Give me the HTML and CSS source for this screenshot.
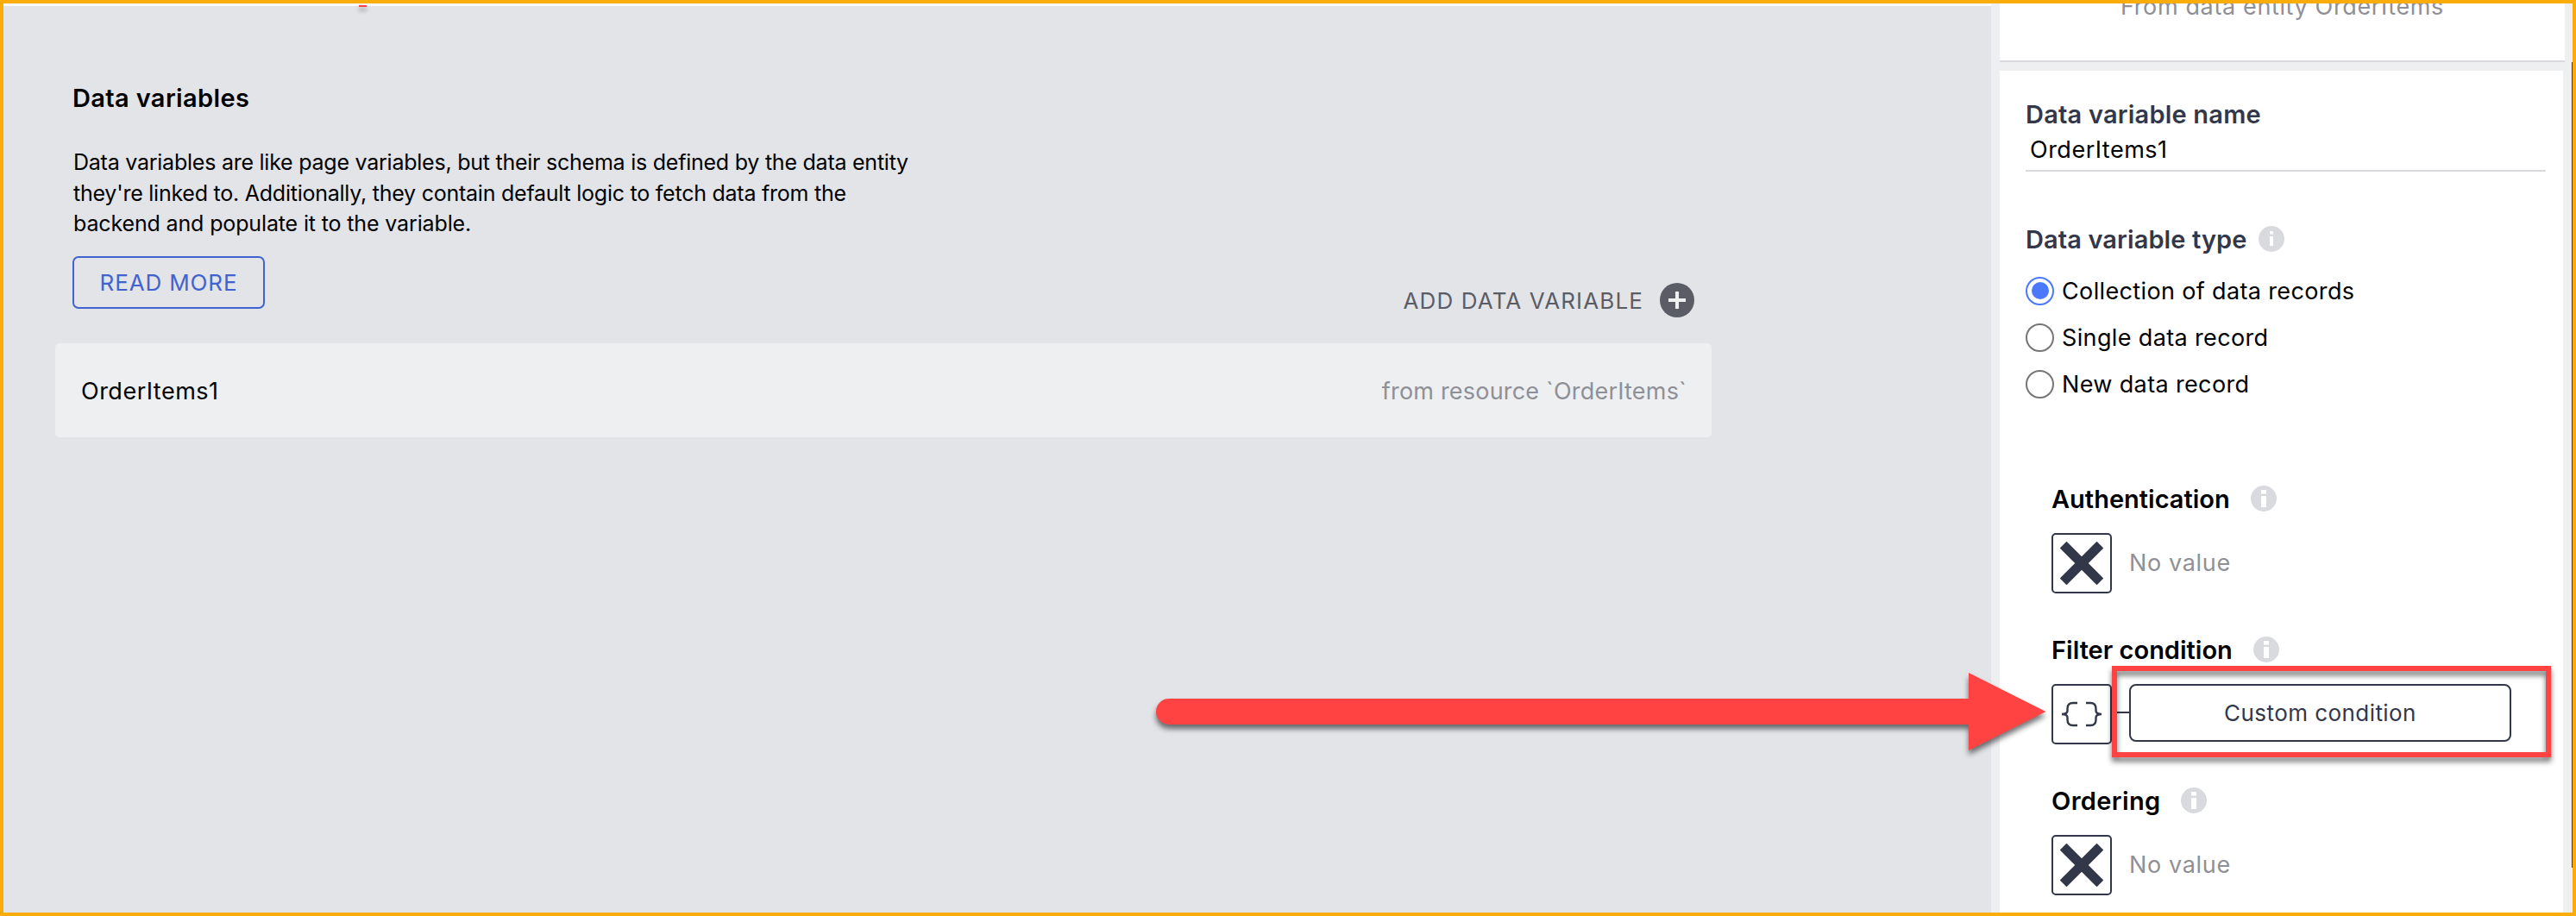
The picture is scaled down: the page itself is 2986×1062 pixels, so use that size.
FILE: index.html
```html
<!DOCTYPE html>
<html lang="en">
<head>
<meta charset="utf-8">
<title>Data variables</title>
<link rel="stylesheet" href="styles.css">
</head>
<body>
<svg width="0" height="0" class="defs">
  <symbol id="info" viewBox="0 0 30 30"><circle cx="15" cy="15" r="15" fill="#d9dade"/><path d="M12 5h6v4.5h-6zM12 12h6v13h-6z" fill="#fff"/></symbol>
  <symbol id="info-thin" viewBox="0 0 30 30"><circle cx="15" cy="15" r="15" fill="#d9dade"/><path d="M13 6h4v3.5h-4zM13 12h4v11h-4z" fill="#fff"/></symbol>
  <symbol id="cross" viewBox="0 0 50 50"><path d="M3.6 3.6 46.4 46.4M46.4 3.6 3.6 46.4" stroke="#32384a" stroke-width="11" fill="none"/></symbol>
</svg>
<div class="frame">
  <main class="main">
    <header class="head">
      <section>
        <h1 class="title">Data variables</h1>
        <p class="intro"><span>Data variables are like page variables, but their schema is defined by the data entity</span><span>they're linked to. Additionally, they contain default logic to fetch data from the</span><span class="last">backend and populate it to the variable.</span></p>
        <a class="read-more">READ MORE</a>
      </section>
      <div class="add">
        <span>ADD DATA VARIABLE</span>
        <svg width="40" height="40" viewBox="0 0 40 40"><circle cx="20" cy="20" r="20" fill="#5a5d66"/><path d="M10 20h20M20 10v20" stroke="#eeeff1" stroke-width="4"/></svg>
      </div>
    </header>
    <div class="row"><span class="row-name">OrderItems1</span><span class="row-source">from resource `OrderItems`</span></div>
  </main>
  <aside class="panel">
    <div class="source"><span>From data entity OrderItems</span></div>
    <div class="card">
      <div class="label">Data variable name</div>
      <div class="input">OrderItems1</div>
      <div class="label type">Data variable type<svg class="info"><use href="#info-thin"/></svg></div>
      <div class="radios">
        <div class="radio"><i class="dot on"></i><span>Collection of data records</span></div>
        <div class="radio"><i class="dot"></i><span>Single data record</span></div>
        <div class="radio"><i class="dot"></i><span>New data record</span></div>
      </div>
      <div class="fields">
        <div class="field">
          <div class="field-label auth">Authentication<svg class="info"><use href="#info"/></svg></div>
          <div class="control"><div class="box"><svg width="50" height="50"><use href="#cross"/></svg></div><span class="empty">No value</span></div>
        </div>
        <div class="field">
          <div class="field-label filter">Filter condition<svg class="info"><use href="#info"/></svg></div>
          <div class="control">
            <div class="box"><svg width="48" height="30" viewBox="0 0 48 30"><path d="M19 2H14Q7.5 2 7.5 8.500V11Q7.500 15 1 15Q7.500 15 7.500 19V21.500Q7.500 28 14 28H19M29 2H34Q40.500 2 40.500 8.500V11Q40.500 15 47 15Q40.500 15 40.500 19V21.500Q40.500 28 34 28H29" fill="none" stroke="#32384a" stroke-width="2.400"/></svg></div>
            <div class="link"></div>
            <div class="custom">Custom condition</div>
          </div>
        </div>
        <div class="field">
          <div class="field-label order">Ordering<svg class="info"><use href="#info"/></svg></div>
          <div class="control"><div class="box"><svg width="50" height="50"><use href="#cross"/></svg></div><span class="empty">No value</span></div>
        </div>
      </div>
    </div>
    <div class="scroll-edge"></div>
  </aside>
</div>
<div class="tick"></div>
<svg class="arrow" width="1060" height="120" viewBox="0 0 1060 120"><path d="M35 40H962V10L1051.500 55 962 100V70H35A15 15 0 0 1 35 40Z" fill="#ff4343"/></svg>
<div class="highlight"></div>
</body>
</html>
```
FILE: styles.css
```css
* { box-sizing: border-box; }
body { margin: 0; width: 2986px; height: 1062px; overflow: hidden; position: relative; background: #faac0a; font-family: Inter, "Liberation Sans", sans-serif; color: #000; white-space: nowrap; }
.defs { position: absolute; }
.frame { display: flex; height: 1062px; border: 4px solid #faac0a; overflow: hidden; }
.main { width: 2304px; background: #e3e4e8; border-top: 3px solid #f8f9fb; padding: 89px 324px 0 60px; }
.head { display: flex; justify-content: space-between; height: 272px; padding: 0 20px; }
.title { margin: 0 0 39px; font-size: 29px; line-height: 36px; font-weight: 600; letter-spacing: .36px; }
.intro { margin: 0 0 19px; padding-left: 1px; font-size: 25px; line-height: 35.6px; letter-spacing: -.24px; }
.intro span { display: block; }
.intro .last { letter-spacing: -.14px; }
.read-more { display: flex; align-items: center; justify-content: center; width: 223px; height: 61px; border: 2px solid #4262cf; border-radius: 7px; color: #4262cf; font-size: 26px; letter-spacing: .87px; }
.add { display: flex; align-items: center; align-self: flex-end; gap: 19px; color: #5a5d66; font-size: 26px; letter-spacing: 1.13px; }
.row { display: flex; align-items: center; justify-content: space-between; width: 1920px; height: 109px; margin-top: 30px; padding: 2px 29px 0 30px; background: #eeeff1; border-radius: 5px; font-size: 27px; }
.row-name { letter-spacing: .5px; }
.row-source { letter-spacing: .2px; color: #8f9096; }
.panel { position: relative; width: 674px; background: #eeeff1; padding-left: 10px; }
.source { width: 655px; height: 68px; background: #fff; border-bottom: 2px solid #d9dade; text-align: center; overflow: hidden; font-size: 27px; line-height: 34px; letter-spacing: .63px; color: #8f9096; }
.source span { display: block; margin-top: -13px; }
.card { width: 653px; height: 976px; margin-top: 10px; padding: 32px 20px 0 30px; background: #fff; }
.label, .field-label { display: flex; align-items: center; height: 36px; font-size: 29px; font-weight: 600; letter-spacing: .2px; }
.label { color: #32384a; }
.info { width: 30px; height: 30px; flex: none; margin-left: 24px; }
.type { margin-top: 60px; letter-spacing: .1px; }
.type .info { margin-left: 13px; }
.input { height: 49px; padding: 7px 0 0 5px; border-bottom: 2px solid #d9dade; font-size: 27px; line-height: 34px; letter-spacing: .5px; }
.radios { margin-top: 15px; }
.radio { display: flex; align-items: center; gap: 9px; height: 54px; font-size: 27px; letter-spacing: .36px; }
.dot { width: 33px; height: 33px; border: 2.5px solid #767676; border-radius: 50%; display: flex; align-items: center; justify-content: center; }
.dot.on { border-color: #4a78ff; }
.dot.on::after { content: ""; width: 20px; height: 20px; border-radius: 50%; background: #4a78ff; }
.fields { display: flex; flex-direction: column; gap: 47px; margin: 88px 0 0 30px; }
.field-label { margin-bottom: 22px; }
.auth { letter-spacing: 0; }
.filter { letter-spacing: 0; }
.order { letter-spacing: .35px; }
.control { display: flex; height: 70px; }
.box { width: 70px; height: 70px; flex: none; border: 2px solid #32384a; border-radius: 5px; display: flex; align-items: center; justify-content: center; }
.empty { align-self: center; margin-left: 20px; padding-bottom: 1px; font-size: 27px; letter-spacing: .65px; color: #8f9096; }
.link { width: 20px; height: 2px; margin-top: 32px; background: #32384a; }
.custom { display: flex; align-items: center; justify-content: center; width: 443px; height: 67px; border: 2px solid #32384a; border-radius: 8px; color: #32384a; font-size: 26px; letter-spacing: .44px; }
.scroll-edge { position: absolute; right: 0; top: 68px; width: 1px; height: 934px; background: #32384a; }
.tick { position: absolute; left: 416px; top: 6px; width: 9px; height: 2px; background: #ff4343; box-shadow: 0 4px 5px rgba(0,0,0,.45); }
.arrow { position: absolute; left: 1320px; top: 770px; filter: drop-shadow(0 5px 3px rgba(0,0,0,.55)); }
.highlight { position: absolute; left: 2448px; top: 772px; width: 509px; height: 106px; border: 6px solid #ff4343; filter: drop-shadow(0 5px 3px rgba(0,0,0,.55)); }
```
